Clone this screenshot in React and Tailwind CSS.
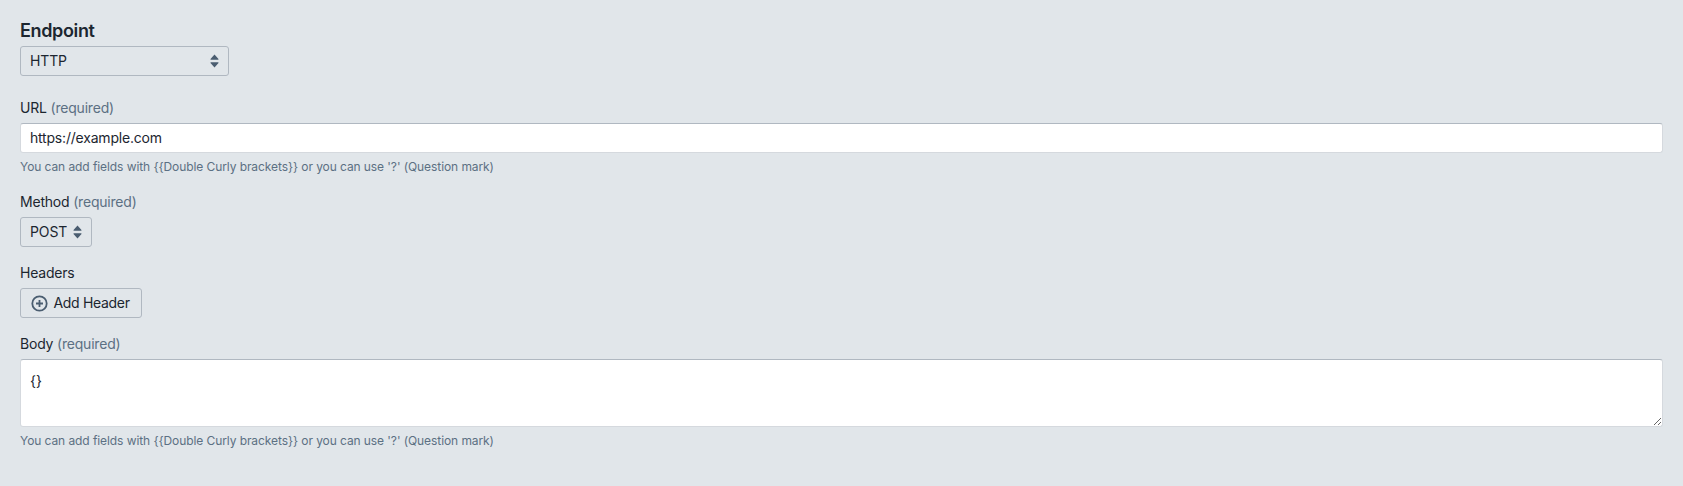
import React from "react";

const HELP = "You can add fields with {{Double Curly brackets}} or you can use '?' (Question mark)";

const Label = ({ text, required }) => (
  <label className="block text-[14px] leading-[20px] tracking-[-0.2px] text-[#1c2630] mb-[5px]">
    {text}
    {required && <span className="text-[#5c7083]"> (required)</span>}
  </label>
);

const Help = () => (
  <p className="mt-[5px] text-[12px] leading-[18px] tracking-[-0.08px] text-[#5c7083]">{HELP}</p>
);

const Arrows = () => (
  <svg width="9" height="14" viewBox="0 0 9 14" className="absolute right-[10px] top-[8px] pointer-events-none">
    <path
      d="M4.5 0.5 L8.5 5 Q8.8 5.8 8 5.8 H1 Q0.2 5.8 0.5 5 Z M4.5 13.5 L0.5 9 Q0.2 8.2 1 8.2 H8 Q8.8 8.2 8.5 9 Z"
      fill="#4a5d70"
    />
  </svg>
);

const Select = ({ value, width }) => (
  <div className={`relative h-[30px] ${width}`}>
    <select
      defaultValue={value}
      className="appearance-none block w-full h-[30px] pl-[9px] pr-[24px] pb-[1px] rounded-[3px] border border-[#b0b8c1] bg-[#e1e6ea] text-[14px] tracking-[-0.13px] text-[#1c2630] outline-none"
    >
      <option>{value}</option>
    </select>
    <Arrows />
  </div>
);

export default function App() {
  return (
    <div className="min-h-[486px] bg-[#e1e6ea] px-[20px] pt-[20px] font-['Inter',sans-serif]">
      <h2 className="text-[18px] leading-[22px] font-semibold tracking-[-0.35px] text-[#1c2630] mb-[4px]">Endpoint</h2>
      <Select value="HTTP" width="w-[209px]" />

      <div className="mt-[22px]">
        <Label text="URL" required />
        <input
          type="text"
          defaultValue="https://example.com"
          className="block w-full h-[30px] px-[9px] pb-[1px] rounded-[3px] border border-[#d5d9de] border-t-[#b0b8c1] bg-white text-[14px] tracking-[-0.2px] text-[#1c2630] outline-none"
        />
        <Help />
      </div>

      <div className="mt-[16px]">
        <Label text="Method" required />
        <Select value="POST" width="w-[72px]" />
      </div>

      <div className="mt-[16px]">
        <Label text="Headers" />
        <button className="flex items-center gap-[6px] h-[30px] w-[122px] pl-[10px] pb-[1px] rounded-[3px] border border-[#b0b8c1] bg-[#e1e6ea] text-[14px] tracking-[-0.32px] text-[#1c2630]">
          <svg width="17" height="17" viewBox="0 0 17 17" fill="none" stroke="#4a5d70" strokeWidth="1.8" className="-ml-[0.5px] mt-[1px]">
            <circle cx="8.5" cy="8.5" r="7.2" />
            <path d="M8.5 5 V12 M5 8.5 H12" />
          </svg>
          Add Header
        </button>
      </div>

      <div className="mt-[16px]">
        <Label text="Body" required />
        <textarea
          defaultValue="{}"
          className="block w-full h-[68px] px-[9px] py-[11px] rounded-[3px] border border-[#d5d9de] border-t-[#b0b8c1] bg-white text-[14px] leading-[20px] text-[#1c2630] outline-none"
        />
        <Help />
      </div>
    </div>
  );
}
